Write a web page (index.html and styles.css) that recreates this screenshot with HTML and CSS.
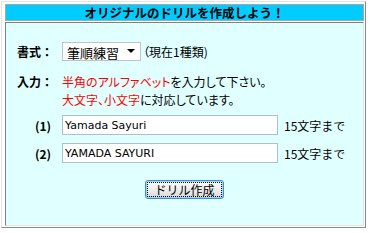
FILE: index.html
```html
<!DOCTYPE html>
<html lang="ja">
<head>
    <meta charset="UTF-8">
    <meta name="viewport" content="width=device-width, initial-scale=1.0">
    <title>オリジナルのドリル</title>
    <link rel="stylesheet" href="styles.css">
</head>
<body>
    <div class="frame">
        <div class="head">オリジナルのドリルを作成しよう！</div>
        <div class="box">
            <div class="row row-format">
                <div class="label">書式：</div>
                <span class="select-wrap">
                    <select class="select">
                        <option>筆順練習</option>
                    </select>
                    <span class="arrow"></span>
                </span>
                <span class="note">（現在1種類)</span>
            </div>
            <div class="row row-input">
                <div class="label">入力：</div>
                <div class="help">
                    <span class="red">半角のアルファベット</span>を入力して下さい。<br>
                    <span class="red">大文字、小文字</span>に対応しています。
                </div>
            </div>
            <div class="row row-name">
                <div class="label num">(1)</div>
                <input class="name" type="text" value="Yamada Sayuri">
                <span class="limit">15文字まで</span>
            </div>
            <div class="row row-name row-name2">
                <div class="label num">(2)</div>
                <input class="name" type="text" value="YAMADA SAYURI">
                <span class="limit">15文字まで</span>
            </div>
            <div class="actions">
                <button class="btn" type="button"><span class="btn-in">ドリル作成</span></button>
            </div>
        </div>
    </div>
</body>
</html>
```

FILE: styles.css
```css
body {
    margin: 0;
    background: #fff;
    font-family: "Noto Sans CJK JP", "DejaVu Sans", sans-serif;
    font-size: 12px;
    color: #000;
}

.frame {
    box-sizing: border-box;
    margin: 1px 0 0 1px;
    width: 365px;
    height: 227px;
    padding: 2px 1px 1px 3px;
    border: 1px solid;
    border-color: #e4e4e4 #8a8a8a #8a8a8a #e4e4e4;
}

.head {
    box-sizing: border-box;
    height: 17px;
    border: 1px solid #a8a8a8;
    background: #00ccff;
    text-align: center;
    font-weight: bold;
    font-size: 12.5px;
    line-height: 15px;
}

.box {
    box-sizing: border-box;
    margin-top: 1px;
    height: 204px;
    padding: 19px 0 0 11px;
    border: 1px solid;
    border-color: #808080 #e4e4e4 #e4e4e4 #808080;
    background: #e0ffff;
}

.row {
    display: flex;
    align-items: center;
}

.label {
    width: 45px;
    flex: none;
    font-weight: bold;
}

.row-format {
    height: 19px;
}

.select-wrap {
    position: relative;
    display: inline-block;
}

.select {
    appearance: none;
    -webkit-appearance: none;
    box-sizing: border-box;
    width: 79px;
    height: 19px;
    margin: 0;
    padding: 0 0 0 4px;
    border: 1px solid #c0c4c8;
    border-radius: 0;
    background: #fff;
    font-family: "Noto Sans CJK JP", sans-serif;
    font-size: 13px;
    color: #000;
}

.arrow {
    position: absolute;
    right: 6px;
    top: 7px;
    width: 0;
    height: 0;
    border-left: 4px solid transparent;
    border-right: 4px solid transparent;
    border-top: 4px solid #000;
}

.note {
    margin-left: 2px;
    font-feature-settings: "palt";
}

.row-input {
    align-items: flex-start;
    margin-top: 12px;
    line-height: 18px;
}

.help {
    font-feature-settings: "palt";
}

.red {
    color: #ff0000;
}

.row-name {
    margin-top: 6px;
}

.row-name2 {
    margin-top: 8px;
}

.num {
    box-sizing: border-box;
    padding-left: 18px;
}

.name {
    box-sizing: border-box;
    width: 216px;
    height: 20px;
    margin: 0;
    padding: 0 2px;
    border: 1px solid #a9bfd6;
    background: #fff;
    font-family: "DejaVu Sans", sans-serif;
    font-size: 11px;
    color: #000;
}

.limit {
    margin-left: 6px;
}

.actions {
    display: flex;
    justify-content: center;
    margin-top: 17px;
    padding-right: 11px;
}

.btn {
    box-sizing: border-box;
    width: 79px;
    height: 19px;
    margin: 0;
    padding: 1px;
    border: 1px solid #3d8fd0;
    border-radius: 3px;
    box-shadow: inset 0 0 0 1px #9fd2f5;
    background: linear-gradient(#fdfdfd, #e6e6e6 70%, #d4d4d4);
    font-family: "Noto Sans CJK JP", sans-serif;
    font-size: 12px;
    color: #000;
}

.btn-in {
    display: block;
    box-sizing: border-box;
    height: 15px;
    line-height: 13px;
    border: 1px dotted #000;
}
```
